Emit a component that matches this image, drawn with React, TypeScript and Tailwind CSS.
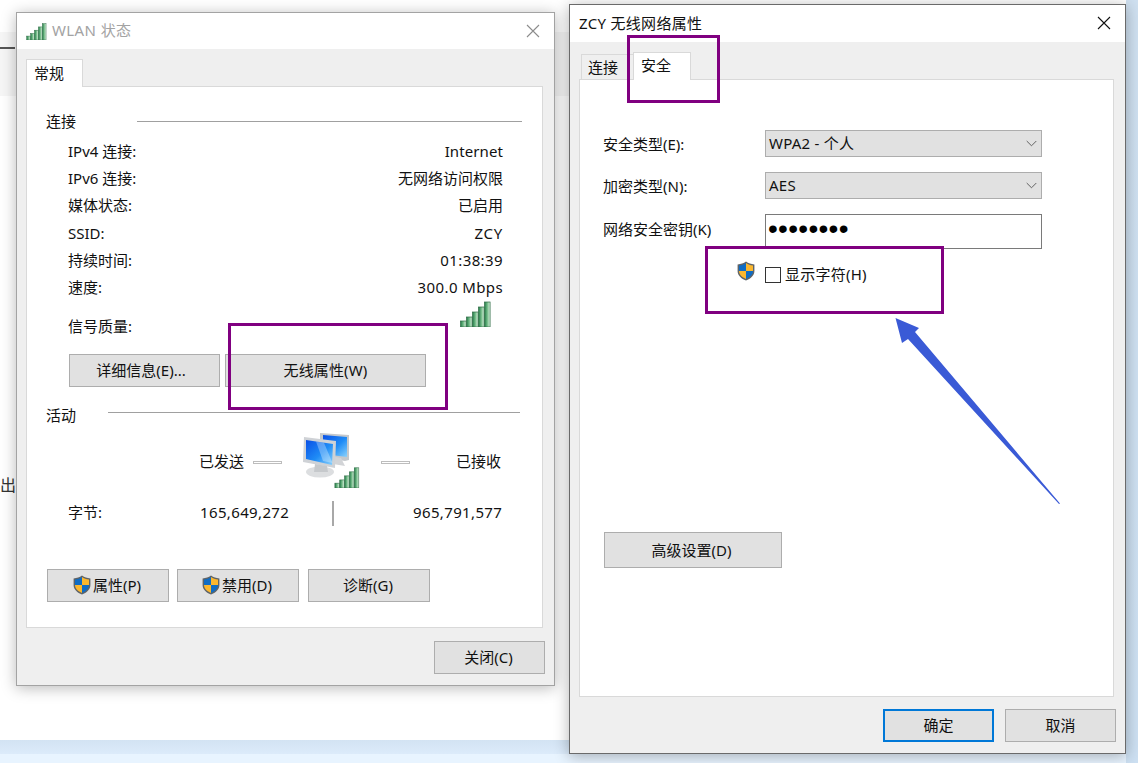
import React from "react";

const Shield = ({ className }: { className: string }) => (
  <svg viewBox="0 0 18 20" className={className}>
    <path d="M9 .6 C11.5 2.4 14 3.2 17.4 3.4 V10 C17.4 14.6 13.6 17.6 9 19.6 C4.4 17.6 .6 14.6 .6 10 V3.4 C4 3.2 6.5 2.4 9 .6Z" fill="#5f6468" />
    <path d="M9 2 V10 H2 V4.4 C4.8 4.2 7 3.4 9 2Z" fill="#0f6cc4" />
    <path d="M9 2 C11 3.4 13.2 4.2 16 4.4 V10 H9Z" fill="#fbb72e" />
    <path d="M2 10 H9 V17.9 C5 16.2 2 13.8 2 10Z" fill="#fbb72e" />
    <path d="M16 10 H9 V17.9 C13 16.2 16 13.8 16 10Z" fill="#0f6cc4" />
  </svg>
);

const Signal = ({ className, id }: { className: string; id: string }) => (
  <svg viewBox="0 0 31 26" className={className}>
    <defs>
      <linearGradient id={id} x1="0" y1="0" x2="1" y2="0">
        <stop offset="0" stopColor="#1f7a45" />
        <stop offset="0.55" stopColor="#7cc08f" />
        <stop offset="1" stopColor="#dff3e2" />
      </linearGradient>
    </defs>
    {[
      [0, 20, 6],
      [6, 16, 10],
      [12, 11, 15],
      [18, 6, 20],
      [24, 1, 25],
    ].map(([x, y, h]) => (
      <rect key={x} x={x + 0.5} y={y} width="5.6" height={h} fill={`url(#${id})`} stroke="#2f6b45" strokeWidth="0.7" />
    ))}
  </svg>
);

const Computers = ({ className }: { className: string }) => (
  <svg viewBox="0 0 48 46" className={className}>
    <defs>
      <linearGradient id="scr" x1="0" y1="0" x2="1" y2="1">
        <stop offset="0" stopColor="#0a50e6" />
        <stop offset="0.55" stopColor="#1f8cf6" />
        <stop offset="1" stopColor="#8ad2fc" />
      </linearGradient>
    </defs>
    <path d="M17 1 L46 3 V28 L42 29 L17 25Z" fill="#c4c8cc" />
    <path d="M20 3 L44 5 V25 L20 22Z" fill="url(#scr)" />
    <path d="M28 24 L38 26 L42 34 L24 31Z" fill="#d2d4d7" />
    <path d="M1 5 L33 9 L32 36 L0 30Z" fill="#cfd2d6" />
    <path d="M3 8 L30 12 L29 33 L3 27Z" fill="url(#scr)" />
    <path d="M13 9.500 L21 10.700 L29.500 31 L20 29Z" fill="#fff" opacity="0.3" />
    <ellipse cx="17" cy="40" rx="14" ry="5.500" fill="#dcdee0" />
    <path d="M12 32 L24 34 L25 40 H11Z" fill="#c6c9cc" />
  </svg>
);

const X = ({ className, color }: { className: string; color: string }) => (
  <svg viewBox="0 0 14 14" className={className}>
    <path d="M1 1 L13 13 M13 1 L1 13" stroke={color} strokeWidth="1.1" />
  </svg>
);

const Btn = ({ className, children }: { className: string; children: React.ReactNode }) => (
  <div className={`flex items-center justify-center bg-[#e1e1e1] border border-[#adadad] h-[33px] pb-[1px] shrink-0 ${className}`}>
    {children}
  </div>
);

const Row = ({ label, value, track = "" }: { label: string; value: string; track?: string }) => (
  <div className="flex justify-between items-center h-[27.3px]">
    <span>{label}</span>
    <span className={track}>{value}</span>
  </div>
);

const Section = ({ title, lineClass }: { title: string; lineClass: string }) => (
  <div className="flex items-center h-[20px]">
    <span className="ml-px">{title}</span>
    <div className={`h-px bg-[#a0a0a0] ${lineClass}`} />
  </div>
);

const Chevron = () => (
  <svg viewBox="0 0 12 7" className="w-[11px] h-[7px]">
    <path d="M.8 .8 L6 6 L11.2 .8" fill="none" stroke="#555" strokeWidth="1" />
  </svg>
);

const Select = ({ text }: { text: string }) => (
  <div className="flex items-center justify-between w-[277px] h-[27px] bg-[#e1e1e1] border border-[#adadad] pl-[3px] pr-[4px]">
    <span className="mb-[2px] tracking-[0.25px]">{text}</span>
    <Chevron />
  </div>
);

export default function App() {
  return (
    <div className="relative w-[1138px] h-[763px] overflow-hidden bg-white text-[15px] leading-[20px] text-[#111] font-['Noto_Sans','Noto_Sans_CJK_SC',sans-serif]">
      {/* desktop behind the windows */}
      <div className="absolute left-0 top-[32px] w-[569px] h-[64px] bg-[#f6f6f6]" />
      <div className="absolute left-0 top-[47px] w-[15px] h-[2px] bg-[#555]" />
      <div className="absolute left-0 top-[475px] text-[16px] text-[#333]">出</div>
      <div className="absolute left-0 top-[740px] w-[1138px] h-[14px] bg-gradient-to-b from-[#d3e3f3] to-[#dcebfa]" />
      <div className="absolute left-0 top-[754px] w-[1138px] h-[9px] bg-[#e8f4ff]" />
      <div className="absolute left-[1126px] top-0 w-[12px] h-[763px] bg-gradient-to-b from-[#cfe0f0] to-[#cde0f2]" />

      {/* WLAN status */}
      <div className="absolute left-[16px] top-[12px] w-[539px] h-[674px] flex flex-col border border-[#a3a3a3] bg-[#efefef] shadow-[0_2px_14px_rgba(0,0,0,0.28)]">
        <div className="flex items-center h-[36px] bg-white pl-[9px] pr-[14px] shrink-0">
          <Signal id="g1" className="w-[21px] h-[17px] mr-[5px]" />
          <span className="text-[#a3a3a3] mb-[3px] tracking-[0.4px]">WLAN 状态</span>
          <X className="w-[14px] h-[14px] ml-auto mb-px" color="#8c8c8c" />
        </div>
        <div className="flex flex-col flex-1 pl-[9px] pr-[11px] pt-[10px]">
          <div className="flex">
            <div className="relative z-10 w-[57px] h-[28px] -mb-px bg-white border border-b-0 border-[#d9d9d9] flex items-center pl-[7px] pb-[2px]">常规</div>
          </div>
          <div className="flex flex-col h-[542px] bg-white border border-[#d9d9d9] pt-[24px] pl-[18px] pr-[20px]">
            <Section title="连接" lineClass="ml-[61px] flex-1" />
            <div className="flex flex-col pl-[23px] pr-[19px] mt-[6px]">
              <Row label="IPv4 连接:" value="Internet" track="tracking-[0.1px]" />
              <Row label="IPv6 连接:" value="无网络访问权限" />
              <Row label="媒体状态:" value="已启用" />
              <Row label="SSID:" value="ZCY" track="tracking-[0.7px]" />
              <Row label="持续时间:" value="01:38:39" track="tracking-[0.4px]" />
              <Row label="速度:" value="300.0 Mbps" track="tracking-[0.4px]" />
              <div className="flex justify-between items-center h-[50px] pr-[12px]">
                <span>信号质量:</span>
                <Signal id="g2" className="w-[31px] h-[26px] mt-[-24px]" />
              </div>
            </div>
            <div className="flex gap-[5px] pl-[24px] mt-[3.2px]">
              <Btn className="w-[151px] pr-[7px]">详细信息(E)...</Btn>
              <Btn className="w-[201px] tracking-[0.15px]">无线属性(W)</Btn>
            </div>
            <div className="mt-[18px]">
              <Section title="活动" lineClass="ml-[32px] flex-1 mt-[-4px] mr-[2px]" />
            </div>
            <div className="flex items-center h-[56px] mt-[7px] pl-[154px]">
              <span className="w-[46px] mt-[2px]">已发送</span>
              <div className="w-[29px] h-[3px] ml-[8px] mt-[5px] border border-[#bdbdbd]" />
              <div className="relative w-[57px] h-[56px] mx-[21px]">
                <Computers className="absolute left-0 top-0 w-[48px] h-[46px]" />
                <Signal id="g3" className="absolute right-0 bottom-0 w-[26px] h-[21px]" />
              </div>
              <div className="w-[29px] h-[3px] mt-[5px] border border-[#bdbdbd]" />
              <span className="ml-[46px] mt-[2px]">已接收</span>
            </div>
            <div className="flex items-center h-[26px] mt-[13px] pl-[23px]">
              <span className="w-[132px] mb-[3px]">字节:</span>
              <span className="w-[132px] mb-[3px] tracking-[0.36px]">165,649,272</span>
              <div className="w-[2px] h-[25px] bg-[#a8a8a8]" />
              <span className="ml-[79px] mb-[3px] tracking-[0.36px]">965,791,577</span>
            </div>
            <div className="flex gap-[8px] pl-[2px] mt-[42px]">
              <Btn className="w-[122px]">
                <Shield className="w-[18px] h-[20px] mr-[2px] -ml-[2px]" />
                属性(P)
              </Btn>
              <Btn className="w-[122px]">
                <Shield className="w-[18px] h-[20px] mr-[2px] -ml-[2px]" />
                禁用(D)
              </Btn>
              <Btn className="w-[122px] ml-px pr-[2px]">诊断(G)</Btn>
            </div>
          </div>
          <div className="flex justify-end -mr-[2px] mt-[13px]">
            <Btn className="w-[111px] pr-[2px]">关闭(C)</Btn>
          </div>
        </div>
      </div>

      {/* Network properties */}
      <div className="absolute left-[569px] top-[4px] w-[557px] h-[750px] flex flex-col border border-[#6a6a6a] bg-[#efefef] shadow-[0_2px_14px_rgba(0,0,0,0.3)]">
        <div className="flex items-center h-[37px] bg-white pl-[9px] pr-[14px] shrink-0">
          <span className="mb-[2px] tracking-[0.3px]">ZCY 无线网络属性</span>
          <X className="w-[14px] h-[14px] ml-auto mb-px" color="#111" />
        </div>
        <div className="flex flex-col flex-1 pl-[9px] pr-[11px] pt-[10px]">
          <div className="flex items-end pl-[2px] h-[27px]">
            <div className="w-[52px] h-[26px] -mb-px border border-b-0 border-r-0 border-[#d9d9d9] flex items-center pl-[6px] pb-[2px]">连接</div>
            <div className="relative z-10 w-[58px] h-[28px] -mb-px bg-white border border-b-0 border-[#d9d9d9] flex items-center pl-[7px] pb-[3px]">安全</div>
          </div>
          <div className="flex flex-col h-[618px] bg-white border border-[#d9d9d9] pt-[50px] pl-[23px]">
            <div className="flex items-center">
              <span className="w-[162px]">安全类型(E):</span>
              <Select text="WPA2 - 个人" />
            </div>
            <div className="flex items-center mt-[15px]">
              <span className="w-[162px]">加密类型(N):</span>
              <Select text="AES" />
            </div>
            <div className="flex items-center mt-[15px]">
              <span className="w-[162px] mb-[5px]">网络安全密钥(K)</span>
              <div className="flex items-center w-[277px] h-[35px] border border-[#7a7a7a] pl-[2px] pb-[5px] text-[#000] text-[28px] leading-none tracking-[0.3px] font-['Liberation_Sans',sans-serif]">
                ••••••••
              </div>
            </div>
            <div className="flex items-start mt-[12px] pl-[134px]">
              <Shield className="w-[18px] h-[20px]" />
              <div className="flex items-center ml-[10px] mt-[3px]">
                <div className="w-[16px] h-[16px] border border-[#333] mr-[4px]" />
                <span className="mb-[2px] tracking-[0.25px]">显示字符(H)</span>
              </div>
            </div>
            <Btn className="w-[178px] h-[36px] mt-[246px] ml-px pr-[3px]">高级设置(D)</Btn>
          </div>
          <div className="flex justify-end gap-[11px] -mr-[2px] mt-[12px]">
            <div className="flex items-center justify-center w-[111px] h-[33px] pb-[1px] bg-[#e1e1e1] border-2 border-[#0078d7]">确定</div>
            <Btn className="w-[111px]">取消</Btn>
          </div>
        </div>
      </div>

      {/* annotations */}
      <div className="absolute left-[228px] top-[323px] w-[220px] h-[87px] border-[3px] border-[#800080]" />
      <div className="absolute left-[627px] top-[35px] w-[93px] h-[68px] border-[3px] border-[#800080]" />
      <div className="absolute left-[705px] top-[246px] w-[239px] h-[68px] border-[3px] border-[#800080]" />
      <svg className="absolute left-[890px] top-[314px] w-[175px] h-[195px]" viewBox="0 0 175 195">
        <path d="M5.500 4 L29 14 L25 18 L170 189.500 L169 190 L18 25 L12 29Z" fill="#3a5ad6" />
      </svg>
    </div>
  );
}
